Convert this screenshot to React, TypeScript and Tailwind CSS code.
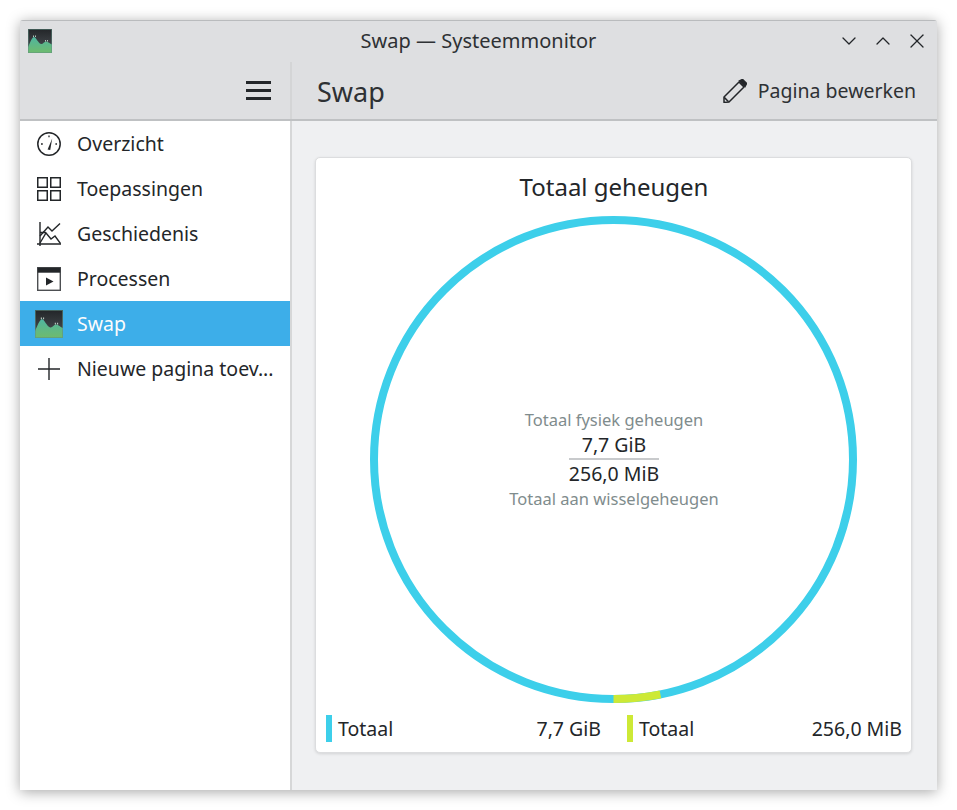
import React from "react";
import { ChevronDown, ChevronUp, X } from "lucide-react";

const AppIcon = ({ size }: { size: number }) => (
  <svg width={size} height={size} viewBox="0 0 24 24" className="shrink-0">
    <defs>
      <linearGradient id="swapBg" x1="0" y1="0" x2="0" y2="1">
        <stop offset="0" stopColor="#232629" />
        <stop offset="1" stopColor="#4d5257" />
      </linearGradient>
      <linearGradient id="swapFill" x1="0" y1="0" x2="0" y2="1">
        <stop offset="0" stopColor="#4fb5a0" />
        <stop offset="1" stopColor="#6fbb6c" />
      </linearGradient>
    </defs>
    <rect x="0" y="0" width="24" height="24" fill="url(#swapBg)" />
    <path
      d="M0 18 C2 14 4 8 6 8 C8 8 10 14 13 15 C15 15.5 16 12.5 18 12.5 C20 12.5 22 15 24 15.5 V24 H0 Z"
      fill="url(#swapFill)"
    />
    <path d="M5 6.5h.8v1.5H5zM7 6.5h.8v1.5H7zM17 11h.8v1.5H17zM19 11h.8v1.5H19z" fill="#d5e8dd" />
    <rect x="0.4" y="0.4" width="23.2" height="23.2" fill="none" stroke="#5f8f84" strokeOpacity="0.6" strokeWidth="0.8" />
  </svg>
);

const GaugeIcon = () => (
  <svg width="24" height="24" viewBox="0 0 24 24" fill="none" stroke="#232629" strokeWidth="1.5">
    <circle cx="12" cy="12" r="11.2" />
    <path d="M15.2 6.5 L10.6 17.5 L13.2 18 Z" fill="#232629" stroke="none" />
    <path d="M4 12h1.8M12 3.6v1.6M18.4 12h1.6" strokeWidth="1.3" />
  </svg>
);

const GridIcon = () => (
  <svg width="24" height="24" viewBox="0 0 24 24" fill="none" stroke="#232629" strokeWidth="1.5">
    <rect x="0.75" y="0.75" width="9.5" height="9.5" />
    <rect x="13.75" y="0.75" width="9.5" height="9.5" />
    <rect x="0.75" y="13.75" width="9.5" height="9.5" />
    <rect x="13.75" y="13.75" width="9.5" height="9.5" />
  </svg>
);

const HistoryIcon = () => (
  <svg width="24" height="24" viewBox="0 0 24 24" fill="none" stroke="#232629" strokeWidth="1.4">
    <path d="M3 0v24M0 22h24" />
    <path d="M3 14 L11 5 L15 9 L23 1.5" />
    <path d="M3 10.5h6M3 21 L9 11 L14 17 L18 14 L23.5 21.5" />
  </svg>
);

const ProcessIcon = () => (
  <svg width="24" height="24" viewBox="0 0 24 24" fill="none">
    <rect x="0.7" y="0.7" width="22.6" height="22.6" stroke="#4d4f52" strokeWidth="1.4" />
    <rect x="0.7" y="0.7" width="22.6" height="5" fill="#232629" />
    <path d="M9 10.5 L16.5 14.5 L9 18.5 Z" fill="#232629" />
  </svg>
);

const PlusIcon = () => (
  <svg width="24" height="24" viewBox="0 0 24 24" fill="none" stroke="#232629" strokeWidth="1.4">
    <path d="M12 1v22M1 12h22" />
  </svg>
);

const MenuIcon = () => (
  <svg width="25" height="19" viewBox="0 0 25 19" fill="#232629">
    <rect x="0" y="0" width="25" height="3" />
    <rect x="0" y="8" width="25" height="3" />
    <rect x="0" y="16" width="25" height="3" />
  </svg>
);

const PencilIcon = () => (
  <svg width="24" height="24" viewBox="0 0 24 24" fill="none" stroke="#232629" strokeWidth="1.5">
    <path d="M1 18 L16 3 L21 8 L6 23 L1 23.4 Z" strokeLinejoin="round" />
    <path d="M1.2 18.4 L5.6 22.8" />
    <path d="M16.5 2 L19.5 0.4 L23.6 4.5 L22 7.5 Z" fill="#232629" />
  </svg>
);

const ITEMS = [
  { label: "Overzicht", icon: <GaugeIcon /> },
  { label: "Toepassingen", icon: <GridIcon /> },
  { label: "Geschiedenis", icon: <HistoryIcon /> },
  { label: "Processen", icon: <ProcessIcon /> },
  { label: "Swap", icon: <AppIcon size={28} />, active: true },
  { label: "Nieuwe pagina toev...", icon: <PlusIcon /> },
];

const Ring = () => {
  const r = 239.5;
  const c = 243.5;
  const angle = (11.3 * Math.PI) / 180;
  const endX = c + r * Math.sin(angle);
  const endY = c + r * Math.cos(angle);
  return (
    <svg width="487" height="487" viewBox="0 0 487 487" fill="none">
      <circle cx={c} cy={c} r={r} stroke="#3dcfea" strokeWidth="8" />
      <path d={`M${c} ${c + r} A${r} ${r} 0 0 0 ${endX} ${endY}`} stroke="#cde936" strokeWidth="8" />
    </svg>
  );
};

const Legend = ({ color, label, value }: { color: string; label: string; value: string }) => (
  <div className="flex flex-1 items-center h-[27px]">
    <div className={`w-[6px] h-[27px] ${color}`} />
    <span className="ml-[6px]">{label}</span>
    <span className="ml-auto">{value}</span>
  </div>
);

export default function App() {
  return (
    <div
      className="w-[957px] h-[810px] pt-[20px] pl-[20px] bg-white overflow-hidden text-[#232629] text-[19.5px] leading-[27px]"
      style={{ fontFamily: '"Noto Sans", sans-serif' }}
    >
      <div className="w-[917px] h-[770px] flex flex-col bg-white rounded-t-[3px] border-t border-[#b9bbbd] shadow-[0_2px_14px_rgba(0,0,0,0.35)]">
        {/* title bar */}
        <div className="h-[41px] shrink-0 flex items-center bg-[#dedfe1] pl-[8px] pr-[8px] pb-[2px] relative">
          <AppIcon size={24} />
          <span className="absolute left-0 right-0 text-center text-[20px] text-[#2e3134]">Swap — Systeemmonitor</span>
          <div className="ml-auto flex items-center gap-[10px]">
            <ChevronDown size={24} strokeWidth={1.3} />
            <ChevronUp size={24} strokeWidth={1.3} />
            <X size={24} strokeWidth={1.3} />
          </div>
        </div>

        {/* toolbars */}
        <div className="h-[59px] shrink-0 flex bg-[#dedfe1] border-b-2 border-[#bfc1c3]">
          <div className="w-[270px] flex items-center justify-end pr-[19px]">
            <MenuIcon />
          </div>
          <div className="w-[2px] bg-[#d4d5d6]" />
          <div className="flex-1 flex items-center pl-[25px] pr-[21px]">
            <span className="text-[27px] pt-[1px] text-[#2e3134]">Swap</span>
            <div className="ml-auto flex items-center gap-[11px]">
              <PencilIcon />
              <span className="text-[#2e3134]">Pagina bewerken</span>
            </div>
          </div>
        </div>

        <div className="flex-1 flex min-h-0">
          {/* sidebar */}
          <div className="w-[270px] shrink-0 bg-white">
            {ITEMS.map((item) => (
              <div
                key={item.label}
                className={`h-[45px] flex items-center ${item.active ? "bg-[#3daee9] text-[#fcfcfc]" : ""}`}
              >
                <div className="w-[57px] flex justify-center">{item.icon}</div>
                <span>{item.label}</span>
              </div>
            ))}
          </div>
          <div className="w-[2px] bg-[#d6d7d8]" />

          {/* page */}
          <div className="flex-1 bg-[#eff0f2] pt-[36px] pl-[23px] pr-[25px]">
            <div className="h-[596px] flex flex-col bg-white rounded-[5px] border border-[#dcdddf] shadow-[0_1px_3px_rgba(0,0,0,0.12)] pl-[10px] pr-[9px]">
              <div className="text-[24px] leading-[32px] text-center pt-[13px] h-[58px] shrink-0">Totaal geheugen</div>
              <div className="relative flex justify-center pr-[1px]">
                <Ring />
                <div className="absolute inset-0 pb-[2px] flex flex-col items-center justify-center text-center">
                  <div className="text-[16.5px] leading-[22px] pt-[2px] text-[#7f8c8d]">Totaal fysiek geheugen</div>
                  <div className="text-[19.5px] leading-[28px] h-[29px] w-[90px] border-b-2 border-[#c8cacc]">7,7 GiB</div>
                  <div className="text-[19.5px] leading-[28px]">256,0 MiB</div>
                  <div className="text-[16.5px] leading-[22px] text-[#7f8c8d]">Totaal aan wisselgeheugen</div>
                </div>
              </div>
              <div className="flex gap-[26px] mt-[12px]">
                <Legend color="bg-[#3dcfea]" label="Totaal" value="7,7 GiB" />
                <Legend color="bg-[#cde936]" label="Totaal" value="256,0 MiB" />
              </div>
            </div>
          </div>
        </div>
      </div>
    </div>
  );
}
